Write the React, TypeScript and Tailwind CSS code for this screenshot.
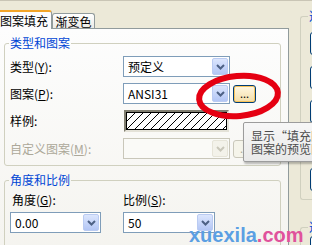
import React from 'react';

// XP-style combo box
function Combo({ value, w, disabled = false }: { value: string; w: string; disabled?: boolean }) {
  return (
    <div
      className={`flex h-[21px] shrink-0 border p-px ${w} ${
        disabled ? 'border-[#C9C7BA] bg-[#FAFAF7]' : 'border-[#7F9DB9] bg-white'
      }`}
    >
      <span className="flex-1 overflow-hidden whitespace-nowrap pl-[3px] leading-[17px] text-black">{value}</span>
      <span
        className={`flex w-[16px] items-center justify-center rounded-[2px] border ${
          disabled
            ? 'border-[#E6E4D8] bg-[#F3F2EA]'
            : 'border-[#BACBF2] bg-linear-to-b from-[#DCE6FD] to-[#B3C6F5]'
        }`}
      >
        <svg width="9" height="6" viewBox="0 0 9 6">
          <path
            d="M1 1l3.5 3.5L8 1"
            fill="none"
            stroke={disabled ? '#C9C7BA' : '#4D6185'}
            strokeWidth="2"
          />
        </svg>
      </span>
    </div>
  );
}

function DotsButton({ disabled = false }: { disabled?: boolean }) {
  return (
    <div
      className={`ml-[3px] flex h-[18px] w-[23px] shrink-0 items-center justify-center rounded-[3px] border text-[11px] leading-[11px] ${
        disabled
          ? 'border-[#C9C7BA] bg-[#F5F4EA] text-[#ACA899]'
          : 'border-[#003C74] bg-linear-to-b from-[#FFF8E4] to-[#F3DDA6] text-black shadow-[inset_0_0_0_1px_#F8C35A]'
      }`}
    >
      ...
    </div>
  );
}

function Label({ text, k, gray = false }: { text: string; k?: string; gray?: boolean }) {
  return (
    <span className={`whitespace-nowrap ${gray ? 'text-[#ACA899]' : 'text-black'}`}>
      {text}
      {k && (
        <>
          (<span className="underline">{k}</span>)
        </>
      )}
      :
    </span>
  );
}

function Check({ label }: { label: string }) {
  return (
    <div className="flex items-center gap-[4px]">
      <span className="h-[13px] w-[13px] border border-[#1C5180] bg-linear-to-br from-[#DCDBD5] to-white" />
      <span className="whitespace-nowrap">{label}</span>
    </div>
  );
}

function XpButton() {
  return (
    <div className="ml-[2px] h-[23px] w-[40px] shrink-0 rounded-[3px] border border-[#003C74] bg-linear-to-b from-white to-[#ECEBE6]" />
  );
}

export default function App() {
  return (
    <div className="relative h-[245px] w-[312px] overflow-hidden border-t border-[#C9C5B5] bg-[#ECE9D8] font-['Noto_Sans_CJK_SC',sans-serif] text-[12px] leading-[12px]">
      <div className="flex h-full">
        {/* left: tab control */}
        <div className="flex w-[289px] shrink-0 flex-col pt-[9px]">
          <div className="flex h-[18px] items-end">
            <div className="relative z-10 -mb-px -ml-[6px] flex h-[19px] w-[58px] items-start justify-center rounded-t-[3px] border-x border-t-2 border-x-[#919B9C] border-t-[#F3A528] bg-[#FCFCFE] pl-[2px] pt-[3px] text-black">
              图案填充
            </div>
            <div className="flex h-[15px] w-[43px] items-start justify-center rounded-t-[3px] border-x border-t border-[#919B9C] bg-linear-to-b from-white to-[#ECEBE6] pt-[2px] text-black">
              渐变色
            </div>
          </div>

          <div className="flex-1 border-r border-t border-[#919B9C] bg-linear-to-b from-[#FDFDFD] to-[#F4F3EE] pl-[4px] pr-[7px]">
            {/* 类型和图案 */}
            <fieldset className="mt-[8px] rounded-[3px] border border-[#D0D0BF] pb-[6px] pl-[5px]">
              <legend className="-ml-px px-px text-[#0046D5]">类型和图案</legend>
              <div className="mt-[7px] flex flex-col gap-[6px]">
                <div className="flex items-center">
                  <div className="w-[113px]"><Label text="类型" k="Y" /></div>
                  <Combo value="预定义" w="w-[107px]" />
                </div>
                <div className="flex items-center">
                  <div className="w-[113px]"><Label text="图案" k="P" /></div>
                  <Combo value="ANSI31" w="w-[107px]" />
                  <DotsButton />
                </div>
                <div className="flex items-center">
                  <div className="w-[114px]"><Label text="样例" /></div>
                  <div className="h-[22px] w-[105px] border-2 border-b-[#E4E2D8] border-l-[#807E70] border-r-[#E4E2D8] border-t-[#807E70]">
                    <div className="h-full w-full border border-black bg-white">
                      <svg width="100%" height="100%">
                        <defs>
                          <pattern id="ansi31" width="8" height="8" patternUnits="userSpaceOnUse">
                            <path d="M0 8L8 0M-2 2L2 -2M6 10L10 6" stroke="#000" strokeWidth="1" />
                          </pattern>
                        </defs>
                        <rect width="100%" height="100%" fill="url(#ansi31)" />
                      </svg>
                    </div>
                  </div>
                </div>
                <div className="flex items-center">
                  <div className="w-[113px]"><Label text="自定义图案" k="M" gray /></div>
                  <Combo value="" w="w-[107px]" disabled />
                  <DotsButton disabled />
                </div>
              </div>
            </fieldset>

            {/* 角度和比例 */}
            <fieldset className="mt-[8px] rounded-[3px] border border-[#D0D0BF] pb-[10px] pl-[5px]">
              <legend className="-ml-px px-px text-[#0046D5]">角度和比例</legend>
              <div className="mt-[8px] flex">
                <div className="flex w-[113px] flex-col gap-[6px]">
                  <div className="pl-[2px]"><Label text="角度" k="G" /></div>
                  <Combo value="0.00" w="w-[91px]" />
                </div>
                <div className="flex flex-col gap-[6px]">
                  <div><Label text="比例" k="S" /></div>
                  <Combo value="50" w="w-[92px]" />
                </div>
              </div>
              <div className="mt-[12px] flex">
                <div className="w-[114px] pl-[2px]"><Check label="双向(U)" /></div>
                <Check label="相对图纸空间(E)" />
              </div>
            </fieldset>
          </div>
        </div>

        {/* right: next group boxes */}
        <div className="flex flex-1 flex-col pl-[11px]">
          <fieldset className="mt-[9px] rounded-[3px] border border-r-0 border-[#D0D0BF] pb-[8px] pl-[7px]">
            <legend className="px-px text-[#0046D5]">选</legend>
            <div className="mt-[10px] flex flex-col gap-[11px]">
              <XpButton />
              <XpButton />
              <XpButton />
              <XpButton />
              <XpButton />
            </div>
          </fieldset>
          <fieldset className="mt-[21px] rounded-[3px] border border-r-0 border-[#D0D0BF] pl-[7px]">
            <legend className="px-px text-[#0046D5]">选</legend>
            <div className="mt-[3px] flex flex-col gap-[11px]">
              <XpButton />
            </div>
          </fieldset>
        </div>
      </div>

      {/* red annotation ellipse */}
      <svg className="absolute left-[190px] top-[66px]" width="100" height="58" viewBox="0 0 100 58">
        <ellipse
          cx="48.5"
          cy="29"
          rx="39.5"
          ry="20"
          fill="none"
          stroke="#E50012"
          strokeWidth="6"
          transform="rotate(-5 48.5 29)"
        />
      </svg>

      {/* tooltip */}
      <div className="absolute left-[243px] top-[121px] z-20 rounded-[2px] border border-[#9C9C9C] bg-linear-to-b from-[#F7F7F7] to-[#E9E9E9] px-[7px] py-[6px] leading-[13px] whitespace-nowrap text-[#4C4C4C] shadow-[1px_2px_2px_rgba(0,0,0,0.25)]">
        <div>显示“填充图案”</div>
        <div>图案的预览图像</div>
      </div>

      {/* watermark */}
      <div className="absolute left-[189px] top-[224px] z-30 font-['Liberation_Sans',Arial,sans-serif] text-[20px] font-bold leading-[20px]">
        <span className="text-[#5B9FE3]">xuexila</span>
        <span className="text-[#E0529C]">.com</span>
      </div>
    </div>
  );
}
